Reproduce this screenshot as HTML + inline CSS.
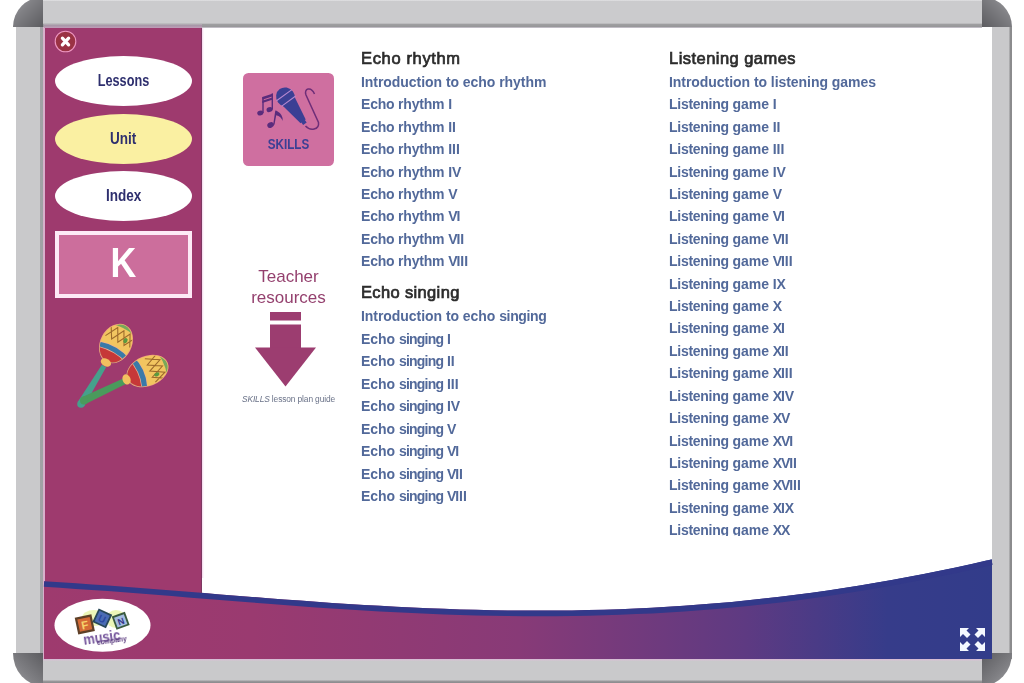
<!DOCTYPE html>
<html><head><meta charset="utf-8">
<style>
*{margin:0;padding:0;box-sizing:border-box}
html,body{width:1024px;height:683px;overflow:hidden;background:#fff;font-family:"Liberation Sans",sans-serif}
.abs{position:absolute}
#top{left:43px;top:0;width:939px;height:27.5px;background:linear-gradient(to bottom,#e4e4e6 0,#cbcbcd 1.5px,#cbcbcd 23px,#9e9ea0 24.5px,#98989a 26.5px,#c0bcc4 27.5px)}
#bot{left:43px;top:659px;width:939px;height:24px;background:linear-gradient(to bottom,#d8b8d6 0,#d4c4d2 1.2px,#c9c9cb 2.2px,#c9c9cb 21px,#9a9a9c 22px,#8a8a8c 24px)}
#lft{left:16px;top:27px;width:28.5px;height:632px;background:linear-gradient(to right,#c9c9cb 0,#c9c9cb 23.5px,#a2a2a6 24px,#a0a0a4 27px,#d8b0cc 27.5px,#d8b0cc 28.5px)}
#rgt{left:991.5px;top:27px;width:20.5px;height:632px;background:linear-gradient(to right,#c9c9cb 0,#c9c9cb 17px,#8c8c8e 18px,#8a8a8c 20.5px)}
.cap{width:30px;height:30px}
#c1{left:13px;top:-3px;border-top-left-radius:30px;background:linear-gradient(135deg,#a0a0a4 0%,#808084 40%,#5c5c60 100%)}
#c2{left:982px;top:-3px;border-top-right-radius:30px;background:linear-gradient(225deg,#a0a0a4 0%,#808084 40%,#5c5c60 100%)}
#c3{left:13px;top:653px;height:33px;border-bottom-left-radius:30px 33px;background:linear-gradient(45deg,#a0a0a4 0%,#808084 40%,#5c5c60 100%)}
#c4{left:982px;top:653px;height:33px;border-bottom-right-radius:30px 33px;background:linear-gradient(315deg,#a0a0a4 0%,#808084 40%,#5c5c60 100%)}
#side{left:44.5px;top:27.5px;width:157.5px;height:631.5px;background:#9e3a6e}
#main{left:202px;top:27.5px;width:789.5px;height:631px;background:#fff}
.ell{position:absolute;left:55px;width:137px;height:50px;border-radius:50%;text-align:center;color:#2e2f6e;font-weight:bold;font-size:16.5px;line-height:49px;will-change:transform}
.ell span{display:inline-block;transform:scaleX(0.82)}
#kbox{left:55px;top:231px;width:137px;height:67px;border:4px solid #fdeaf6;background:#cc6e9c;color:#fff;text-align:center;font-weight:bold;font-size:42.5px;line-height:55px;will-change:transform}
#kbox span{display:inline-block;transform:scaleX(0.84)}
.list b{letter-spacing:-1.1px}
.list i{font-style:normal;letter-spacing:-0.78px}
.list i.l{letter-spacing:-0.28px}
.list i.r{letter-spacing:-0.2px}
.list i.s2{letter-spacing:-0.36px}
.h{position:absolute;font-size:16.5px;letter-spacing:0.65px;font-weight:normal;-webkit-text-stroke:0.7px #2c2c2c;color:#2c2c2c;line-height:20px;white-space:nowrap;will-change:transform}
.list{position:absolute;font-size:14px;letter-spacing:-0.05px;font-weight:bold;color:#52699a;line-height:22.4px;white-space:nowrap;will-change:transform}
#tr{left:243px;top:266px;width:91px;text-align:center;color:#94406e;font-size:17px;line-height:21px;will-change:transform}
#guide{left:236px;top:393.5px;width:105px;text-align:center;color:#6a7288;font-size:8.4px;letter-spacing:-0.12px;line-height:10px;white-space:nowrap;will-change:transform}
</style></head><body>
<div id="top" class="abs"></div>
<div id="bot" class="abs"></div>
<div id="lft" class="abs"></div>
<div id="rgt" class="abs"></div>
<div id="c1" class="abs cap"></div>
<div id="c2" class="abs cap"></div>
<div id="c3" class="abs cap"></div>
<div id="c4" class="abs cap"></div>
<div id="side" class="abs"></div>
<div id="main" class="abs"></div>
<div class="abs" style="left:44px;top:23.5px;width:158px;height:4px;background:linear-gradient(to bottom,#b8b0b8 0,#a898a8 1.5px,#b898b2 3px,#c0a0b8 4px)"></div>
<div class="abs" style="left:200.5px;top:27.5px;width:1.5px;height:631px;background:#7e3862"></div>
<div class="abs" style="left:202px;top:27.5px;width:2px;height:550px;background:linear-gradient(to right,#f4d4ec,#fff)"></div>

<!-- close button -->
<svg class="abs" style="left:54px;top:30px" width="23" height="23" viewBox="0 0 23 23">
<circle cx="11.5" cy="11.5" r="10.3" fill="#9a3244" stroke="#ee96c0" stroke-width="1.1"/>
<path d="M8.4 8.2 L14.6 14.8 M14.6 8.2 L8.4 14.8" stroke="#fff" stroke-width="3.3" stroke-linecap="round"/>
</svg>

<div class="ell" style="top:55.5px;background:#fff"><span style="transform:scaleX(0.77)">Lessons</span></div>
<div class="ell" style="top:113.5px;background:#faf0a2"><span>Unit</span></div>
<div class="ell" style="top:171px;background:#fff"><span>Index</span></div>
<div id="kbox" class="abs"><span>K</span></div>

<!-- maracas -->
<svg class="abs" style="left:0;top:0" width="200" height="420" viewBox="0 0 200 420">
<defs>
<clipPath id="hc"><ellipse cx="0" cy="0" rx="15" ry="20"/></clipPath>
</defs>
<path d="M106.1 367.3 L101.9 364.7 L77.7 402 L84.3 406 Z" fill="#46a08c"/><circle cx="81" cy="404" r="3.8" fill="#46a08c"/>
<path d="M126.3 383.7 L123.7 378.3 L82.3 396.9 L85.7 404.1 Z" fill="#4a9a5c"/><circle cx="84" cy="400.5" r="4" fill="#4a9a5c"/>
<g transform="translate(116 343.5) rotate(28)">
<ellipse cx="0" cy="0" rx="15.8" ry="20.8" fill="#f0a878"/>
<ellipse cx="0" cy="0" rx="15" ry="20" fill="#f2c560"/>
<g clip-path="url(#hc)">
<path d="M-20 -13 Q0 -21 20 -13 L20 -30 L-20 -30Z" fill="#78a85a"/>
<path d="M-20 30 L-20 7 Q0 -1 20 7 L20 30Z" fill="#f0b090"/>
<path d="M-20 30 L-20 7.6 Q0 -0.4 20 7.6 L20 30Z" fill="#3a7aa8"/>
<path d="M-20 30 L-20 12.5 Q0 5 20 12.5 L20 30Z" fill="#f0b090"/>
<path d="M-20 30 L-20 13.2 Q0 5.7 20 13.2 L20 30Z" fill="#c63838"/>
</g>
<path clip-path="url(#hc)" d="M-13 -2 L-6 -15 L1 -2 L8 -15 L14 -3 M-13 -14 L-6 -2 L1 -15 L8 -2 L14 -13" fill="none" stroke="#9c6a2c" stroke-width="1.1"/>
<ellipse cx="7" cy="-7" rx="2" ry="2.6" fill="#5a9a40"/>
<ellipse cx="0" cy="21.5" rx="5.5" ry="3.8" fill="#f2c060"/>
</g>
<g transform="translate(147.5 371) rotate(68) scale(0.95 1.05)">
<ellipse cx="0" cy="0" rx="15.8" ry="20.8" fill="#f0a878"/>
<ellipse cx="0" cy="0" rx="15" ry="20" fill="#f2c560"/>
<g clip-path="url(#hc)">
<path d="M-20 -13 Q0 -21 20 -13 L20 -30 L-20 -30Z" fill="#78a85a"/>
<path d="M-20 30 L-20 7 Q0 -1 20 7 L20 30Z" fill="#f0b090"/>
<path d="M-20 30 L-20 7.6 Q0 -0.4 20 7.6 L20 30Z" fill="#3a7aa8"/>
<path d="M-20 30 L-20 12.5 Q0 5 20 12.5 L20 30Z" fill="#f0b090"/>
<path d="M-20 30 L-20 13.2 Q0 5.7 20 13.2 L20 30Z" fill="#c63838"/>
</g>
<path clip-path="url(#hc)" d="M-13 -2 L-6 -15 L1 -2 L8 -15 L14 -3 M-13 -14 L-6 -2 L1 -15 L8 -2 L14 -13" fill="none" stroke="#9c6a2c" stroke-width="1.1"/>
<ellipse cx="7" cy="-7" rx="2" ry="2.6" fill="#5a9a40"/>
<ellipse cx="0" cy="21.5" rx="5.5" ry="3.8" fill="#f2c060"/>
</g>
</svg>
<!-- bottom wave -->
<svg class="abs" style="left:0;top:0" width="1024" height="683" viewBox="0 0 1024 683">
<defs><linearGradient id="wg" x1="44" y1="0" x2="992" y2="0" gradientUnits="userSpaceOnUse">
<stop offset="0" stop-color="#9e3a6e"/><stop offset="0.22" stop-color="#9a3a70"/><stop offset="0.5" stop-color="#883a77"/><stop offset="0.74" stop-color="#5e3a82"/><stop offset="0.89" stop-color="#363c8a"/><stop offset="1" stop-color="#323c8a"/></linearGradient></defs>
<path d="M44 581.2 L60 582.2 L76 583.3 L92 584.4 L108 585.5 L124 586.7 L140 587.9 L156 589.2 L172 590.5 L188 591.8 L204 593.1 L220 594.4 L236 595.7 L252 596.9 L268 598.2 L284 599.4 L300 600.6 L316 601.8 L332 602.9 L348 603.9 L364 604.9 L380 605.8 L396 606.7 L412 607.5 L428 608.2 L444 608.8 L460 609.4 L476 609.8 L492 610.2 L508 610.4 L524 610.6 L540 610.6 L556 610.6 L572 610.4 L588 610.1 L604 609.7 L620 609.2 L636 608.5 L652 607.8 L668 606.8 L684 605.8 L700 604.6 L716 603.3 L732 601.9 L748 600.3 L764 598.6 L780 596.8 L796 594.8 L812 592.7 L828 590.4 L844 588.0 L860 585.5 L876 582.8 L892 580.0 L908 577.0 L924 574.0 L940 570.7 L956 567.4 L972 563.9 L988 560.3 L992 559.3 L992 659 L44 659 Z" fill="url(#wg)"/>
<path d="M44 584.0 L60 585.0 L76 586.1 L92 587.2 L108 588.3 L124 589.5 L140 590.7 L156 592.0 L172 593.3 L188 594.6 L204 595.9 L220 597.2 L236 598.5 L252 599.7 L268 601.0 L284 602.2 L300 603.4 L316 604.6 L332 605.7 L348 606.7 L364 607.7 L380 608.6 L396 609.5 L412 610.3 L428 611.0 L444 611.6 L460 612.2 L476 612.6 L492 613.0 L508 613.2 L524 613.4 L540 613.4 L556 613.4 L572 613.2 L588 612.9 L604 612.5 L620 612.0 L636 611.3 L652 610.6 L668 609.6 L684 608.6 L700 607.4 L716 606.1 L732 604.7 L748 603.1 L764 601.4 L780 599.6 L796 597.6 L812 595.5 L828 593.2 L844 590.8 L860 588.3 L876 585.6 L892 582.8 L908 579.8 L924 576.8 L940 573.5 L956 570.2 L972 566.7 L988 563.1 L992 562.1" fill="none" stroke="#32398a" stroke-width="5.6"/>
</svg>

<!-- logo -->
<svg class="abs" style="left:54px;top:598px" width="98" height="55" viewBox="0 0 98 55">
<ellipse cx="48.5" cy="27.2" rx="48" ry="26.5" fill="#fff"/>
<ellipse cx="40" cy="20" rx="12" ry="8" fill="#e4f29a" opacity="0.7"/>
<ellipse cx="62" cy="21" rx="10" ry="9" fill="#e4f29a" opacity="0.7"/>
<g transform="rotate(-12 30.8 26.4)"><rect x="22.3" y="17.9" width="17" height="17" fill="#5e4028"/><rect x="24.5" y="20.1" width="12.6" height="12.6" fill="#d46a36"/><text x="30.8" y="31.2" font-size="11.5" font-weight="bold" fill="#f6d26a" text-anchor="middle" font-family="Liberation Sans">F</text></g>
<g transform="rotate(25 48.3 20.4)"><rect x="40.8" y="12.9" width="15" height="15" fill="#284858"/><rect x="42.6" y="14.7" width="11.4" height="11.4" fill="#4a6cb4"/><text x="48.3" y="24.3" font-size="10" font-weight="bold" fill="#2a48a0" text-anchor="middle" font-family="Liberation Sans">U</text></g>
<g transform="rotate(-20 66.7 22.8)"><rect x="59.7" y="15.8" width="14" height="14" fill="#3a5a3e"/><rect x="61.5" y="17.6" width="10.4" height="10.4" fill="#a4bce0"/><text x="66.7" y="26.6" font-size="9" font-weight="bold" fill="#34348a" text-anchor="middle" font-family="Liberation Sans">N</text></g>
<g transform="rotate(-8 50 38)">
<text x="29" y="43.5" font-size="15" font-weight="bold" fill="#72529a" font-family="Liberation Sans" textLength="37" lengthAdjust="spacingAndGlyphs">music</text>
<text x="42" y="46" font-size="6.5" font-weight="bold" fill="#5a3a7e" font-family="Liberation Sans" textLength="30" lengthAdjust="spacingAndGlyphs">company</text>
</g>
</svg>
<!-- expand icon -->
<svg class="abs" style="left:960px;top:628px" width="25" height="23" viewBox="0 0 25 23">
<g fill="#f4f8ff">
<path d="M0 0 L9 0 L6.5 2.5 L10.5 6.5 L7 10 L3 6 L0 9 Z"/>
<path d="M25 0 L16 0 L18.5 2.5 L14.5 6.5 L18 10 L22 6 L25 9 Z"/>
<path d="M0 23 L9 23 L6.5 20.5 L10.5 16.5 L7 13 L3 17 L0 14 Z"/>
<path d="M25 23 L16 23 L18.5 20.5 L14.5 16.5 L18 13 L22 17 L25 14 Z"/>
</g></svg>

<!-- skills icon -->
<svg class="abs" style="left:243px;top:73px" width="91" height="93" viewBox="0 0 91 93">
<rect x="0" y="0" width="91" height="93" rx="5.5" fill="#cf6fa0"/>
<text x="45.5" y="75.8" font-size="13.9" font-weight="bold" fill="#3b3f94" text-anchor="middle" font-family="Liberation Sans" textLength="41.5" lengthAdjust="spacingAndGlyphs">SKILLS</text>
<g transform="translate(42.5 24) rotate(-36)">
<path d="M-7.6 4 L7.6 4 L3.2 30 L2.2 30 L2.2 33 L-2.2 33 L-2.2 30 L-3.2 30 Z" fill="#3b3f94"/>
<ellipse cx="0" cy="0" rx="9.2" ry="9.8" fill="#3b3f94"/>
<path d="M-9.5 -2.2 L9.5 -2.2 M-8.8 5.2 L8.8 5.2" stroke="#b888d0" stroke-width="1.1"/>
</g>
<path d="M62.5 53 C67 58 76.5 57 75.5 49.5 L63 22 C60.5 15.5 68 13 71.5 21" fill="none" stroke="#6e2e78" stroke-width="1.5"/>
<g fill="#5a2c7c">
<ellipse cx="17.3" cy="40" rx="3.1" ry="2.4" transform="rotate(-20 17.3 40)"/>
<ellipse cx="26.6" cy="36.6" rx="3.1" ry="2.4" transform="rotate(-20 26.6 36.6)"/>
<rect x="19.3" y="24" width="1.4" height="16"/>
<rect x="28.6" y="20.5" width="1.4" height="16"/>
<path d="M19.3 24 L30 20.5 L30 23.2 L19.3 26.7 Z"/>
<path d="M19.3 27.8 L30 24.3 L30 26.4 L19.3 29.9 Z"/>
<ellipse cx="27.6" cy="52" rx="3.4" ry="2.7" transform="rotate(-25 27.6 52)"/>
<path d="M30.2 51.5 L32.3 37.5 L33.6 37.7 Q40.5 41.5 39.6 48 Q38.2 43.5 33.2 42.2 L31.5 51.8 Z"/>
</g>
</svg>
<div id="tr" class="abs">Teacher<br>resources</div>
<svg class="abs" style="left:255px;top:312px" width="61" height="75" viewBox="0 0 61 75">
<g fill="#9c3d70"><rect x="15" y="0" width="31" height="8.5"/><rect x="15" y="12.5" width="31" height="23.5"/><path d="M0 35.5 L61 35.5 L30.5 74.5 Z"/></g>
</svg>
<div id="guide" class="abs"><i>SKILLS</i> lesson plan guide</div>

<div class="h" style="left:360.6px;top:48px">Echo rhythm</div>
<div class="list" style="left:360.5px;top:71px"><div>Introduction to echo rhythm</div><div><i class='r'>Echo rhythm</i> I</div><div><i class='r'>Echo rhythm</i> II</div><div><i class='r'>Echo rhythm</i> III</div><div><i class='r'>Echo rhythm</i> IV</div><div><i class='r'>Echo rhythm</i> V</div><div><i class='r'>Echo rhythm</i> <b>V</b>I</div><div><i class='r'>Echo rhythm</i> <b>V</b>II</div><div><i class='r'>Echo rhythm</i> <b>V</b>III</div></div>
<div class="h" style="left:360.6px;top:281.6px;letter-spacing:0.35px">Echo singing</div>
<div class="list" style="left:360.5px;top:305px;line-height:22.5px"><div>Introduction to echo <i class='s2'>singing</i></div><div>Echo <i>singing</i> I</div><div>Echo <i>singing</i> II</div><div>Echo <i>singing</i> III</div><div>Echo <i>singing</i> IV</div><div>Echo <i>singing</i> V</div><div>Echo <i>singing</i> <b>V</b>I</div><div>Echo <i>singing</i> <b>V</b>II</div><div>Echo <i>singing</i> <b>V</b>III</div></div>
<div class="h" style="left:668.8px;top:48px;letter-spacing:0.46px">Listening games</div>
<div class="list" style="left:668.8px;top:71px;height:465px;overflow:hidden"><div>Introduction to listening games</div><div><i class='l'>Listening</i> game I</div><div><i class='l'>Listening</i> game II</div><div><i class='l'>Listening</i> game III</div><div><i class='l'>Listening</i> game IV</div><div><i class='l'>Listening</i> game V</div><div><i class='l'>Listening</i> game <b>V</b>I</div><div><i class='l'>Listening</i> game <b>V</b>II</div><div><i class='l'>Listening</i> game <b>V</b>III</div><div><i class='l'>Listening</i> game IX</div><div><i class='l'>Listening</i> game X</div><div><i class='l'>Listening</i> game <b>X</b>I</div><div><i class='l'>Listening</i> game <b>X</b>II</div><div><i class='l'>Listening</i> game <b>X</b>III</div><div><i class='l'>Listening</i> game <b>X</b>IV</div><div><i class='l'>Listening</i> game <b>X</b>V</div><div><i class='l'>Listening</i> game <b>X</b><b>V</b>I</div><div><i class='l'>Listening</i> game <b>X</b><b>V</b>II</div><div><i class='l'>Listening</i> game <b>X</b><b>V</b>III</div><div><i class='l'>Listening</i> game <b>X</b>IX</div><div><i class='l'>Listening</i> game <b>X</b>X</div></div>
</body></html>
